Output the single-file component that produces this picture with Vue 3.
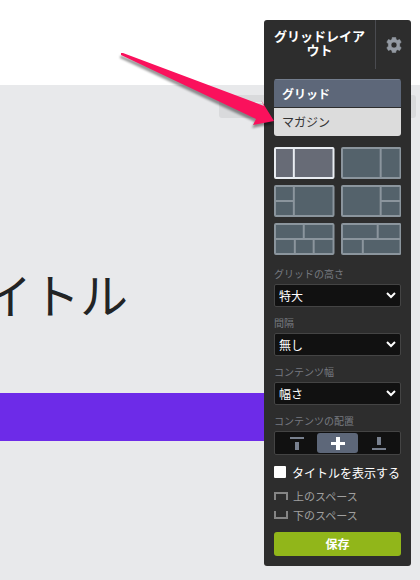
<script setup>
import { ref } from 'vue'

const kind = ref('grid')
const layout = ref(0)
const align = ref('middle')
const showTitle = ref(false)

const layouts = [
  { name: '左カラム', d: 'M20 1V31' },
  { name: '右カラム', d: 'M40 1V31' },
  { name: '左二段', d: 'M20 1V31M1 16H20' },
  { name: '右二段', d: 'M40 1V31M40 16H60' },
  { name: '上二下三', d: 'M1 16H60M30 1V16M21 16V31M40 16V31' },
  { name: '上二下二', d: 'M1 16H60M37 1V16M22 16V31' },
]

const fields = [
  { id: 'height', label: 'グリッドの高さ', value: '特大' },
  { id: 'gap', label: '間隔', value: '無し' },
  { id: 'width', label: 'コンテンツ幅', value: '幅さ' },
]

const aligns = [
  { id: 'top', name: '上揃え', d: 'M0 0H14V2H0ZM5 5H9V13H5Z' },
  { id: 'middle', name: '中央揃え', d: 'M5 0H9V5H14V8H9V13H5V8H0V5H5Z' },
  { id: 'bottom', name: '下揃え', d: 'M5 0H9V8H5ZM0 11H14V13H0Z' },
]
</script>

<template>
  <div class="page">
    <header class="masthead"></header>
    <main class="hero">
      <div class="drop">イテ</div>
      <h1 class="headline">イトル</h1>
      <div class="band"></div>
    </main>

    <aside class="panel">
      <div class="panel-head">
        <h2>グリッドレイアウト</h2>
        <button class="gear" type="button" aria-label="設定">
          <svg width="16" height="16" viewBox="0 0 16 16">
            <path
              fill="#949aa3"
              stroke="#949aa3"
              stroke-width=".6"
              stroke-linejoin="round"
              fill-rule="evenodd"
              d="M6.3 .4H9.7L10.1 2.5L11.6 3.3L13.6 2.5L15.2 5.3L13.6 6.7V9.3L15.2 10.7L13.6 13.5L11.6 12.7L10.1 13.5L9.7 15.6H6.3L5.9 13.5L4.4 12.7L2.4 13.5L.8 10.7L2.4 9.3V6.7L.8 5.3L2.4 2.5L4.4 3.3L5.9 2.5ZM8 5A3 3 0 1 0 8 11A3 3 0 1 0 8 5Z"
            />
          </svg>
        </button>
      </div>

      <div class="panel-body">
        <div class="kinds">
          <button type="button" :class="{ active: kind === 'grid' }" @click="kind = 'grid'">グリッド</button>
          <button type="button" :class="{ active: kind === 'magazine' }" @click="kind = 'magazine'">マガジン</button>
        </div>

        <div class="layouts">
          <button
            v-for="(item, i) in layouts"
            :key="item.name"
            type="button"
            :class="{ active: layout === i }"
            :aria-label="item.name"
            @click="layout = i"
          >
            <svg viewBox="0 0 61 32" preserveAspectRatio="none">
              <rect x="1" y="1" width="59" height="30" rx="1" />
              <path :d="item.d" />
            </svg>
          </button>
        </div>

        <div v-for="field in fields" :key="field.id" class="field">
          <label :for="field.id">{{ field.label }}</label>
          <div class="select">
            <select :id="field.id">
              <option>{{ field.value }}</option>
            </select>
            <svg width="10" height="7" viewBox="0 0 10 7">
              <path d="M1 1L5 5L9 1" fill="none" stroke="#fff" stroke-width="2" />
            </svg>
          </div>
        </div>

        <div class="field">
          <span class="caption">コンテンツの配置</span>
          <div class="segments">
            <button
              v-for="item in aligns"
              :key="item.id"
              type="button"
              :class="{ active: align === item.id }"
              :aria-label="item.name"
              @click="align = item.id"
            >
              <svg width="14" height="13" viewBox="0 0 14 13"><path :d="item.d" /></svg>
            </button>
          </div>
        </div>

        <label class="check">
          <input v-model="showTitle" type="checkbox" />
          <span>タイトルを表示する</span>
        </label>

        <div class="spaces">
          <button type="button">
            <svg width="14" height="8" viewBox="0 0 14 8"><path d="M1 8V1H13V8" /></svg>
            上のスペース
          </button>
          <button type="button">
            <svg width="14" height="8" viewBox="0 0 14 8"><path d="M1 0V7H13V0" /></svg>
            下のスペース
          </button>
        </div>

        <button class="save" type="button">保存</button>
      </div>
    </aside>

    <svg class="arrow" width="156" height="80" viewBox="0 0 156 80">
      <path d="M2 3L4 3L145 56L142 50L155 71L134 75L137 69L2 5Z" fill="#fa115c" />
    </svg>
  </div>
</template>

<style>
body {
  background: #fff;
}
</style>

<style scoped>
* {
  box-sizing: border-box;
}

.page {
  position: relative;
  display: flex;
  flex-direction: column;
  min-height: 100vh;
  overflow: hidden;
  font-family: "Noto Sans CJK JP", sans-serif;
}

button {
  margin: 0;
  padding: 0;
  border: 0;
  background: none;
  font: inherit;
  color: inherit;
  cursor: pointer;
}

svg {
  display: block;
}

.masthead {
  height: 85px;
}

.hero {
  flex: 1;
  padding-top: 10px;
  background: #e8e9eb;
}

.drop {
  height: 23px;
  margin-right: 4px;
  margin-left: 219px;
  padding-left: 22px;
  border-radius: 3px;
  background: #d9dadc;
  color: #eeeff1;
  font-size: 12px;
  line-height: 23px;
}

.headline {
  margin: 140px 0 0 -16px;
  color: #222425;
  font-size: 48px;
  font-weight: 400;
  line-height: 70px;
}

.band {
  height: 48px;
  margin-top: 65px;
  margin-right: 20px;
  background: #6d2be8;
}

.panel {
  position: absolute;
  top: 20px;
  right: 9px;
  width: 147px;
  border-radius: 3px;
  background: #2d2d2d;
  color: #fff;
}

.panel-head {
  display: flex;
  height: 49px;
}

.panel-head h2 {
  flex: 1;
  margin: 0;
  padding: 9px 10px 0;
  font-size: 13px;
  font-weight: 700;
  line-height: 14px;
  text-align: center;
}

.gear {
  display: flex;
  align-items: center;
  justify-content: center;
  width: 36px;
  border-left: 1px solid #4a4b50;
}

.panel-body {
  padding: 10px;
}

.kinds {
  display: flex;
  flex-direction: column;
  gap: 1px;
  overflow: hidden;
  border-radius: 3px;
}

.kinds button {
  height: 28px;
  padding-left: 8px;
  background: #dcdcdc;
  color: #333;
  font-size: 12px;
  line-height: 28px;
  text-align: left;
}

.kinds .active {
  border-top: 1px solid #737d8d;
  background: #5d6779;
  color: #fff;
  font-weight: 700;
  line-height: 24px;
}

.layouts {
  display: grid;
  grid-template-columns: 1fr 1fr;
  gap: 6px;
  margin-top: 11px;
}

.layouts svg {
  width: 100%;
  height: 32px;
  fill: #54626b;
  stroke: #8b959d;
  stroke-width: 2;
}

.layouts .active svg {
  fill: #676b76;
  stroke: #e9edf2;
}

.field {
  margin-top: 9px;
}

.field label,
.caption {
  display: block;
  height: 17px;
  color: #777a80;
  font-size: 10px;
  line-height: 14px;
}

.layouts + .field {
  margin-top: 12px;
}

.select {
  display: grid;
  align-items: center;
}

.select select,
.select svg {
  grid-area: 1 / 1;
}

.select svg {
  justify-self: end;
  margin-right: 5px;
  pointer-events: none;
}

.select select {
  width: 100%;
  height: 23px;
  padding: 0 4px;
  border: 1px solid #444;
  border-radius: 2px;
  appearance: none;
  background: #111;
  color: #fff;
  font-family: inherit;
  font-size: 12px;
}

.segments {
  display: grid;
  grid-template-columns: repeat(3, 1fr);
  height: 24px;
  padding: 1px;
  border: 1px solid #444;
  border-radius: 2px;
  background: #111;
  fill: #78808e;
}

.segments button {
  display: flex;
  align-items: center;
  justify-content: center;
  border-radius: 3px;
}

.segments .active {
  background: #5d6779;
  fill: #fff;
}

.check {
  display: flex;
  align-items: center;
  gap: 6px;
  height: 18px;
  margin-top: 8px;
  font-size: 12px;
  white-space: nowrap;
}

.check input {
  width: 12px;
  height: 12px;
  margin: 0;
  border-radius: 1px;
  appearance: none;
  background: #fff;
}

.check input:checked {
  border: 3px solid #fff;
  background: #5d6779;
}

.spaces {
  margin-top: 5px;
  color: #a0a0a0;
  font-size: 11px;
}

.spaces button {
  display: flex;
  align-items: center;
  gap: 5px;
  height: 19px;
}

.spaces path {
  fill: none;
  stroke: #858585;
  stroke-width: 2;
}

.save {
  width: 100%;
  height: 24px;
  margin-top: 8px;
  border-radius: 3px;
  background: #91b61a;
  font-size: 12px;
  font-weight: 700;
  line-height: 24px;
}

.arrow {
  position: absolute;
  top: 50px;
  right: 145px;
  overflow: visible;
  filter: drop-shadow(-1px 3px 1px rgba(0, 0, 0, 0.4));
  pointer-events: none;
}
</style>
